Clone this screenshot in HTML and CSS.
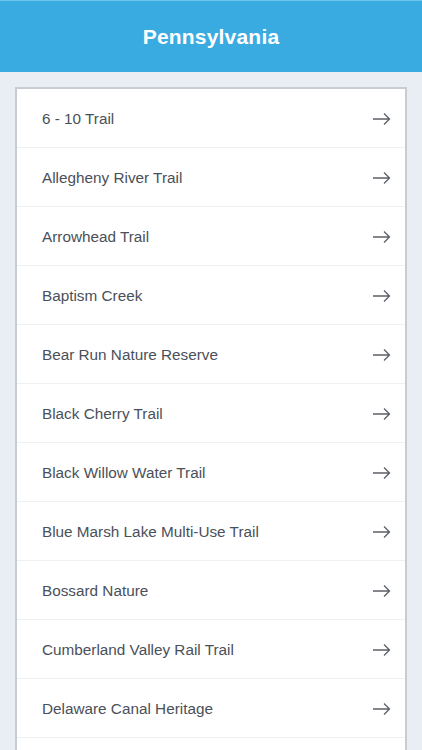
FILE: index.html
```html
<!DOCTYPE html>
<html>
<head>
<meta charset="utf-8">
<link rel="stylesheet" href="styles.css">
</head>
<body>
<header class="topbar"><h1 class="title">Pennsylvania</h1></header>
<main class="content">
  <ul class="list">
    <li class="row"><span class="label">6 - 10 Trail</span><svg class="arrow" viewBox="0 0 18 14"><path d="M0 7H16.5M11 1.5L16.5 7L11 12.5"/></svg></li>
    <li class="row"><span class="label">Allegheny River Trail</span><svg class="arrow" viewBox="0 0 18 14"><path d="M0 7H16.5M11 1.5L16.5 7L11 12.5"/></svg></li>
    <li class="row"><span class="label">Arrowhead Trail</span><svg class="arrow" viewBox="0 0 18 14"><path d="M0 7H16.5M11 1.5L16.5 7L11 12.5"/></svg></li>
    <li class="row"><span class="label">Baptism Creek</span><svg class="arrow" viewBox="0 0 18 14"><path d="M0 7H16.5M11 1.5L16.5 7L11 12.5"/></svg></li>
    <li class="row"><span class="label">Bear Run Nature Reserve</span><svg class="arrow" viewBox="0 0 18 14"><path d="M0 7H16.5M11 1.5L16.5 7L11 12.5"/></svg></li>
    <li class="row"><span class="label">Black Cherry Trail</span><svg class="arrow" viewBox="0 0 18 14"><path d="M0 7H16.5M11 1.5L16.5 7L11 12.5"/></svg></li>
    <li class="row"><span class="label">Black Willow Water Trail</span><svg class="arrow" viewBox="0 0 18 14"><path d="M0 7H16.5M11 1.5L16.5 7L11 12.5"/></svg></li>
    <li class="row"><span class="label">Blue Marsh Lake Multi-Use Trail</span><svg class="arrow" viewBox="0 0 18 14"><path d="M0 7H16.5M11 1.5L16.5 7L11 12.5"/></svg></li>
    <li class="row"><span class="label">Bossard Nature</span><svg class="arrow" viewBox="0 0 18 14"><path d="M0 7H16.5M11 1.5L16.5 7L11 12.5"/></svg></li>
    <li class="row"><span class="label">Cumberland Valley Rail Trail</span><svg class="arrow" viewBox="0 0 18 14"><path d="M0 7H16.5M11 1.5L16.5 7L11 12.5"/></svg></li>
    <li class="row"><span class="label">Delaware Canal Heritage</span><svg class="arrow" viewBox="0 0 18 14"><path d="M0 7H16.5M11 1.5L16.5 7L11 12.5"/></svg></li>
    <li class="row row-empty"></li>
  </ul>
</main>
</body>
</html>
```
FILE: styles.css
```css
html, body {
  margin: 0;
  padding: 0;
  background: #e9eef5;
  font-family: "Liberation Sans", Arial, sans-serif;
  overflow: hidden;
  height: 750px;
}
.topbar {
  height: 72px;
  background: #3aabe1;
  border-top: 1px solid #6cc3ec;
  box-sizing: border-box;
  display: flex;
  align-items: center;
  justify-content: center;
}
.title {
  margin: 0;
  color: #ffffff;
  font-size: 21px;
  font-weight: bold;
  letter-spacing: 0.2px;
}
.content {
  padding: 15px 15px 0 15px;
}
.list {
  list-style: none;
  margin: 0;
  padding: 0;
  background: #ffffff;
  border: 2px solid #c7ccd3;
  border-bottom: none;
}
.row {
  height: 59px;
  box-sizing: border-box;
  border-bottom: 1px solid #eef0f3;
  display: flex;
  align-items: center;
  justify-content: space-between;
  padding: 2px 14px 0 25px;
}
.label {
  color: #4a5059;
  font-size: 15.3px;
}
.arrow {
  width: 18px;
  height: 14px;
  fill: none;
  stroke: #5b5f66;
  stroke-width: 1.3;
}
```
